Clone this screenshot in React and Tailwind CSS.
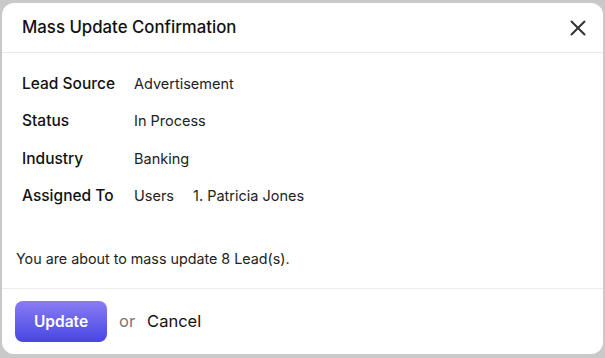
export default function App() {
  const rows = [
    ["Lead Source", "Advertisement"],
    ["Status", "In Process"],
    ["Industry", "Banking"],
  ];
  return (
    <div className="w-[605px] h-[358px] bg-[#c9c9c9] pt-[3px] pl-[2px] overflow-hidden" style={{ fontFamily: "Inter, 'Noto Sans', sans-serif" }}>
      <div className="w-[601px] h-[351px] bg-white rounded-[12px] flex flex-col">
        <div className="h-[50px] flex items-center justify-between pl-[20px] pr-[17px] pt-[1px] border-b border-[#e8e8e8]">
          <span className="text-[16.8px] text-[#111] font-medium">Mass Update Confirmation</span>
          <svg width="16" height="16" viewBox="0 0 16 16" className="text-[#333]">
            <path d="M1.5 1.5 L14.5 14.5 M14.5 1.5 L1.5 14.5" stroke="currentColor" strokeWidth="2" strokeLinecap="round" />
          </svg>
        </div>
        <div className="flex-1 flex flex-col pt-[12px] border-b border-[#ececec]">
          {rows.map(([l, v]) => (
            <div key={l} className="h-[37.4px] flex items-center pl-[20px]">
              <span className="w-[112px] text-[15.5px] text-[#111] font-medium">{l}</span>
              <span className="text-[14.5px] text-[#222]">{v}</span>
            </div>
          ))}
          <div className="h-[37.4px] flex items-center pl-[20px]">
            <span className="w-[112px] text-[15.5px] text-[#111] font-medium">Assigned To</span>
            <span className="w-[59px] text-[14.5px] text-[#222]">Users</span>
            <span className="text-[14.5px] text-[#222]">1. Patricia Jones</span>
          </div>
          <div className="mt-[34px] pl-[14px] text-[14.3px] leading-[20px] text-[#222]">
            You are about to mass update 8 Lead(s).
          </div>
        </div>
        <div className="h-[65px] flex items-center pl-[13px]">
          <button className="w-[92px] h-[41px] rounded-[8px] bg-gradient-to-b from-[#8a7bf4] to-[#4845e2] text-white text-[15.5px] font-semibold">
            Update
          </button>
          <span className="ml-[12px] text-[16.5px] text-[#777]">or</span>
          <span className="ml-[12px] text-[16.5px] text-[#111]">Cancel</span>
        </div>
      </div>
    </div>
  );
}
